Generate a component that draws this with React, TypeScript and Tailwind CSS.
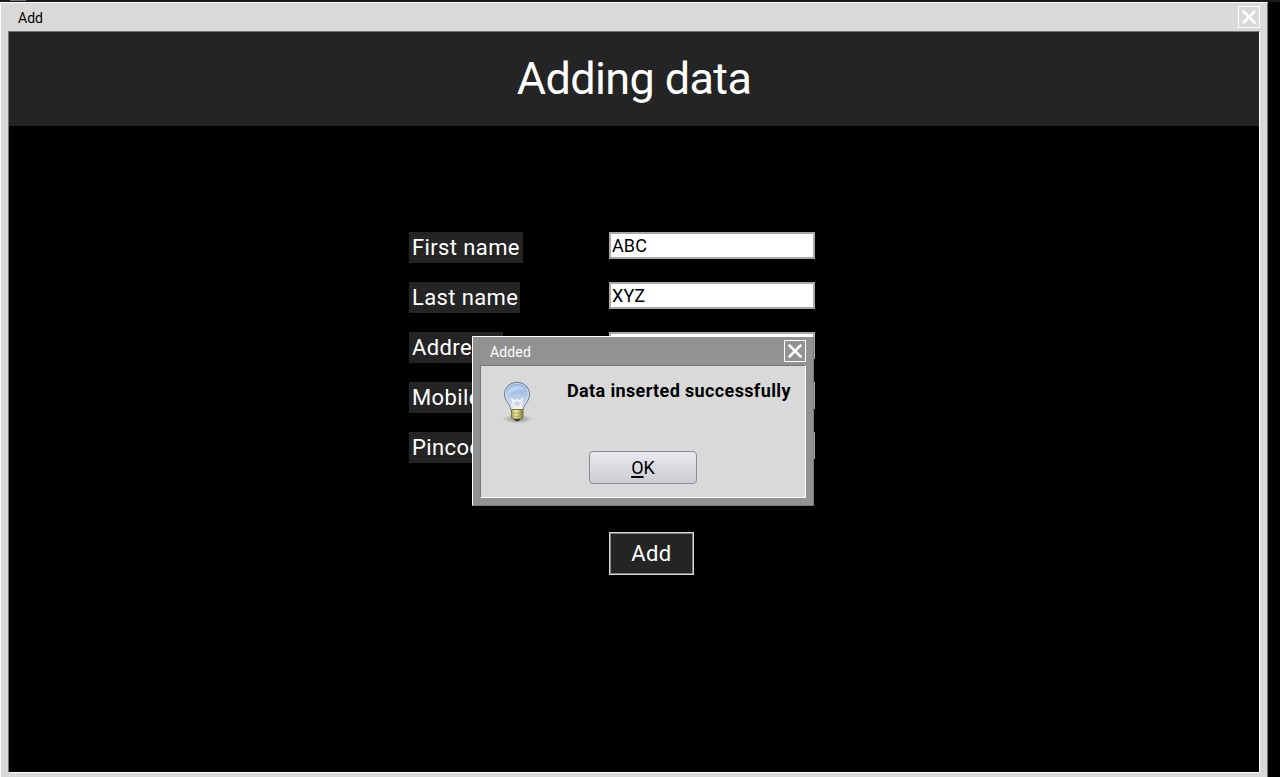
import React from "react";

function CloseButton() {
  return (
    <button className="flex size-[22px] shrink-0 items-center justify-center border border-white">
      <svg width="14" height="14" viewBox="0 0 14 14" stroke="#ffffff" strokeWidth="2.5" strokeLinecap="round">
        <path d="M1.500 1.500 12.500 12.500M12.500 1.500 1.500 12.500" />
      </svg>
    </button>
  );
}

function Field({ label, width, value }: { label: string; width: number; value: string }) {
  return (
    <div className="flex h-[50px] items-start">
      <div className="w-[200px] shrink-0">
        <div
          className="h-[31px] overflow-hidden bg-[#242424] pl-[3px] text-[22px] leading-[31px] tracking-[0.38px] whitespace-nowrap text-white"
          style={{ width }}
        >
          {label}
        </div>
      </div>
      <input
        className="h-[27px] w-[206px] border-2 border-[#a9a9a9] bg-white pl-px text-[18px] leading-[23px] tracking-[0.1px] text-black outline-none"
        defaultValue={value}
        spellCheck={false}
      />
    </div>
  );
}

function Bulb() {
  return (
    <svg width="36" height="50" viewBox="0 0 36 50" className="block">
      <defs>
        <linearGradient id="glass" x1="0" y1="0" x2="0" y2="1">
          <stop offset="0" stopColor="#86abdc" />
          <stop offset="0.5" stopColor="#b3caea" />
          <stop offset="1" stopColor="#dfe3e8" />
        </linearGradient>
        <linearGradient id="brass" x1="0" y1="0" x2="1" y2="0">
          <stop offset="0" stopColor="#a9a35a" />
          <stop offset="0.35" stopColor="#f3f0ae" />
          <stop offset="0.7" stopColor="#c5bd68" />
          <stop offset="1" stopColor="#77713a" />
        </linearGradient>
        <radialGradient id="shade">
          <stop offset="0" stopColor="#555" stopOpacity="0.75" />
          <stop offset="1" stopColor="#777" stopOpacity="0" />
        </radialGradient>
      </defs>
      <ellipse cx="17.500" cy="43" rx="15" ry="4.500" fill="url(#shade)" />
      <path
        d="M17 6.300C9.800 6.300 4.500 11.500 4.500 18.200c0 5 2.500 7.600 4.400 10.400 1 1.500 1.500 3 1.900 5h12.400c.4-2 .9-3.500 1.900-5 1.900-2.800 4.400-5.400 4.400-10.400C29.500 11.500 24.200 6.300 17 6.300Z"
        fill="url(#glass)"
        stroke="#737b8b"
        strokeWidth="1"
      />
      <path
        d="M17 7.500C10.500 7.500 5.700 12.200 5.700 18.200c0 4.500 2.400 7 4.200 9.800 1 1.500 1.500 3 1.800 4.700h10.600c.3-1.700.8-3.200 1.800-4.700 1.800-2.800 4.200-5.300 4.200-9.800C28.300 12.200 23.500 7.500 17 7.500Z"
        fill="none"
        stroke="#dfe9f6"
        strokeWidth="1"
        opacity="0.7"
      />
      <path d="M7 20c-.5-5 4-10 9-10.500 5-.5 8 2 9.500 4.500C20 13 12 14 7 20Z" fill="#cfe0f6" opacity="0.6" />
      <path d="M14 31.500 12 23l2.700 2.500 2.300-2 2.300 2L22 23l-2 8.500" fill="none" stroke="#fbfbf6" strokeWidth="1.400" opacity="0.9" />
      <path d="M12.500 31.500q4.500-3 9 0v2h-9Z" fill="#f2f2ec" opacity="0.8" />
      <path d="M11.500 33.500h11.500v8q-2 1.500-5.700 1.500t-5.800-1.500Z" fill="url(#brass)" stroke="#77743f" strokeWidth="1" />
      <path d="M12 36.800q5.500 1.400 10.500-.5M12 39.800q5.500 1.400 10.500-.5" fill="none" stroke="#99934d" strokeWidth="0.900" />
      <path d="M14 43h6.500l-1.700 2.300h-3.100Z" fill="#414141" />
    </svg>
  );
}

function MessageDialog() {
  return (
    <div className="absolute top-[336px] left-[472px] flex h-[170px] w-[342px] flex-col border border-t-white border-r-[#7b7b7b] border-b-[#7b7b7b] border-l-white bg-[#929292] px-[7px] pb-[7px]">
      <div className="flex h-7 shrink-0 items-start justify-between pt-[3px] pl-[10px]">
        <span className="text-[14px] leading-[24px] tracking-[0.15px] text-white">Added</span>
        <CloseButton />
      </div>
      <div className="flex flex-1 flex-col border border-t-[#777777] border-r-white border-b-white border-l-[#777777] bg-[#d9d9d9]">
        <div className="flex h-[85px] shrink-0 items-start pt-[10px] pl-[19px]">
          <Bulb />
          <p className="ml-[31px] text-[18px] leading-[30px] font-bold tracking-[0.37px] whitespace-nowrap text-black">
            Data inserted successfully
          </p>
        </div>
        <button className="ml-[108px] flex h-[33px] w-[108px] justify-center rounded-[4px] border border-[#8c8c93] bg-linear-to-b from-[#e9e9ef] to-[#cbcbd2] text-[18px] leading-[32px] text-black">
          <span className="underline decoration-2 underline-offset-[2px]">O</span>K
        </button>
      </div>
    </div>
  );
}

export default function App() {
  return (
    <div className="relative h-[777px] w-[1280px] overflow-hidden bg-black font-['Roboto',sans-serif]">
      <div className="h-[2px] bg-[#1c1a1a] pl-[10px]">
        <div className="h-px w-4 bg-[#777777]" />
      </div>
      <div className="flex h-[775px] w-[1268px] flex-col border-t border-r border-l border-t-white border-r-[#777777] border-l-white bg-[#d9d9d9] px-[7px] pb-[4px]">
        <div className="flex h-7 shrink-0 items-start justify-between pt-[3px] pl-[10px]">
          <span className="text-[14px] leading-[24px] text-black">Add</span>
          <CloseButton />
        </div>
        <div className="flex-1 border border-t-[#777777] border-r-white border-b-white border-l-[#777777] bg-black">
          <h1 className="h-[94px] bg-[#242424] text-center text-[45px] leading-[94px] tracking-[-0.62px] text-white">
            Adding data
          </h1>
          <form className="pt-[106px] pl-[400px]" onSubmit={(e) => e.preventDefault()}>
            <Field label="First name" width={114} value="ABC" />
            <Field label="Last name" width={111} value="XYZ" />
            <Field label="Address" width={94} value="" />
            <Field label="Mobile no" width={110} value="" />
            <Field label="Pincode" width={92} value="" />
            <div className="pt-[50px] pl-[200px]">
              <button className="block h-[43px] w-[85px] border border-[#d9d9d9] bg-[#242424]">
                <span className="block h-[41px] border border-[#828282] text-[22px] leading-[39px] tracking-[0.38px] text-white">
                  Add
                </span>
              </button>
            </div>
          </form>
        </div>
      </div>
      <MessageDialog />
    </div>
  );
}
